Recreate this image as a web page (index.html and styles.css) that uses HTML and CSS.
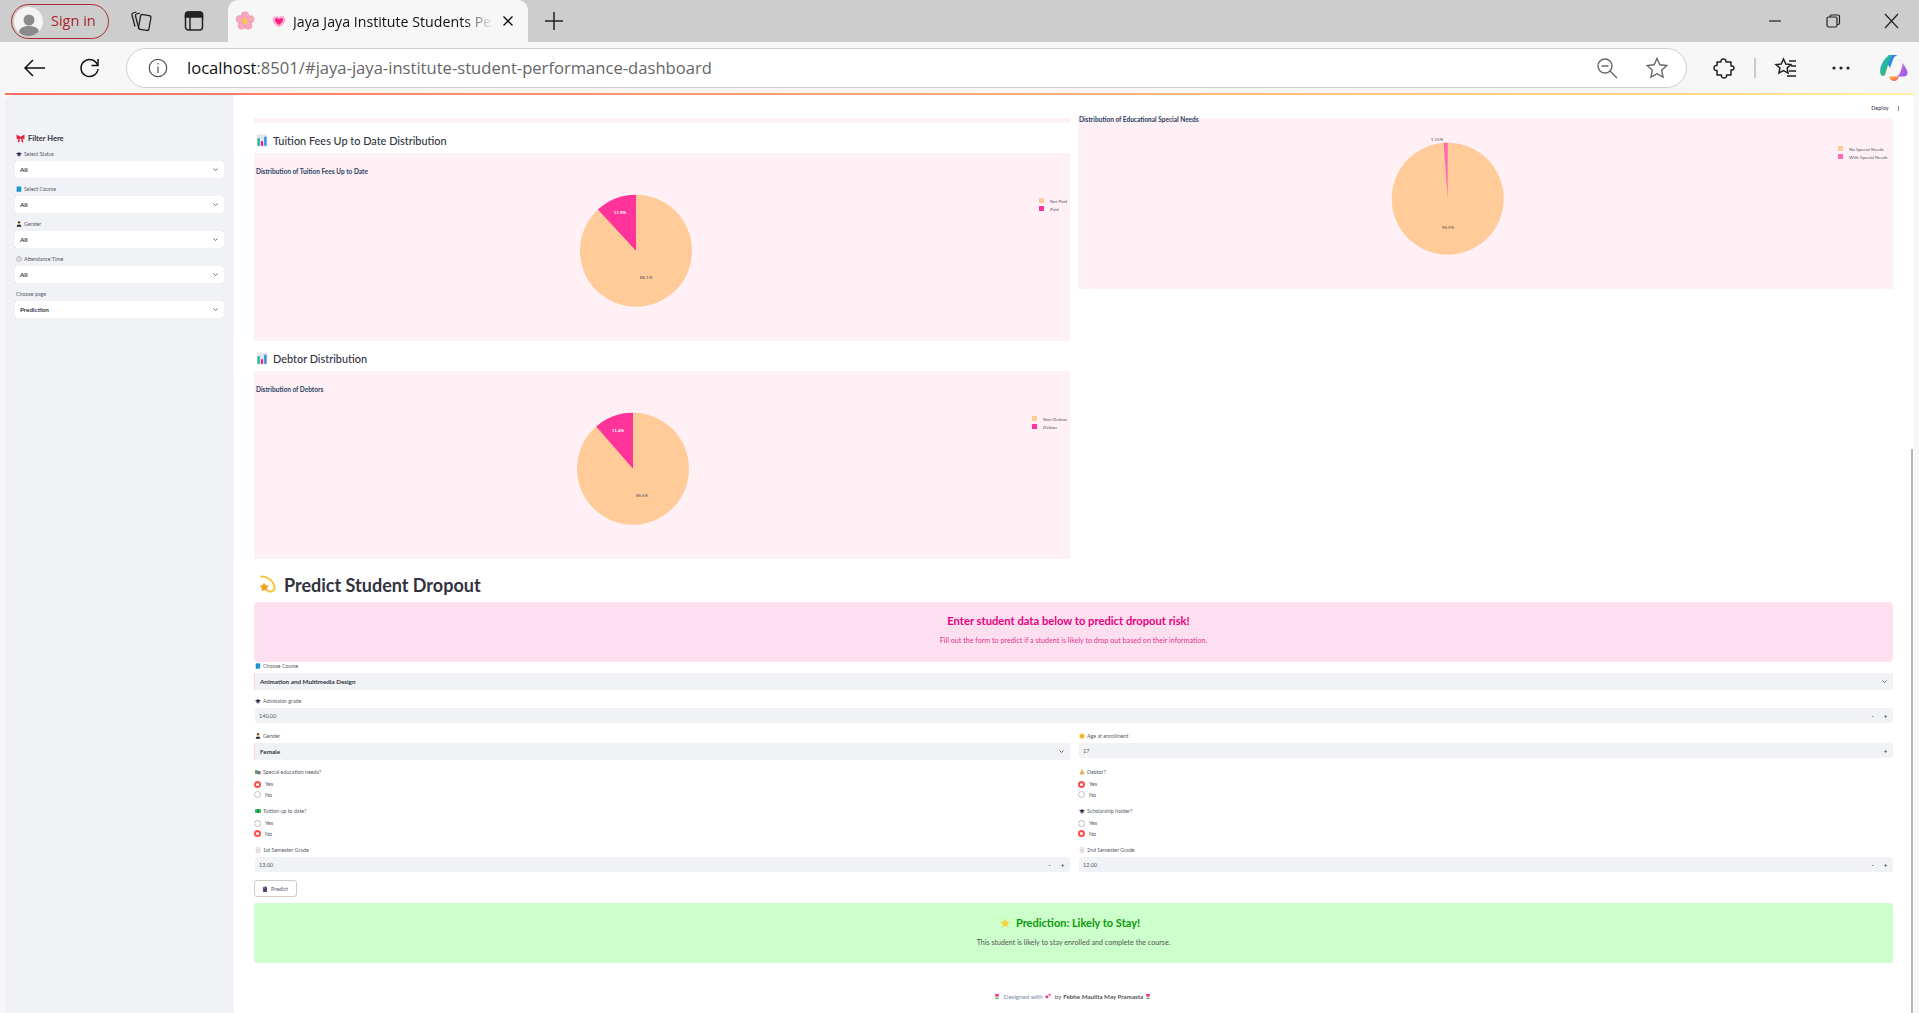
FILE: index.html
```html
<!DOCTYPE html>
<html lang="en">
  <head>
    <meta charset="UTF-8" />
    <title>Jaya Jaya Institute Students Performance</title>
    <link rel="stylesheet" href="styles.css">
  </head>
  <body>
    <svg class="defs" width="0" height="0">
      <defs>
        <linearGradient id="cop1" x1="0" y1="0" x2="1" y2="1"><stop offset="0" stop-color="#17b6e6"/><stop offset=".55" stop-color="#2fb58a"/><stop offset="1" stop-color="#f2d23c"/></linearGradient>
        <linearGradient id="cop2" x1="0" y1="0" x2="1" y2="1"><stop offset="0" stop-color="#e86fd2"/><stop offset="1" stop-color="#8a5be8"/></linearGradient>
        <linearGradient id="cop3" x1="0" y1="0" x2="1" y2="1"><stop offset="0" stop-color="#ffb52e"/><stop offset="1" stop-color="#f4587a"/></linearGradient>
        <linearGradient id="cop4" x1="0" y1="0" x2="1" y2="0"><stop offset="0" stop-color="#1e9be8"/><stop offset="1" stop-color="#3b6fe6"/></linearGradient>
      </defs>
      <symbol id="e-bow" viewBox="0 0 16 16"><path fill="#e0243c" d="M8 5 1 1v8l3-.6L3 15l3-1 1-6h2l1 6 3 1-1-6.600 3 .6V1z"/></symbol>
      <symbol id="e-cap" viewBox="0 0 16 16"><path fill="#35224a" d="M8 3 0 7l8 4 8-4z"/><path fill="#4d3a63" d="M4 10v3c2 1.500 6 1.500 8 0v-3l-4 2z"/></symbol>
      <symbol id="e-book" viewBox="0 0 16 16"><path fill="#1d97dc" d="M3 1h11v14H3z"/><path fill="#0f6fa8" d="M2 1h2v14H2z"/></symbol>
      <symbol id="e-person" viewBox="0 0 16 16"><path fill="#2b2320" d="M5 1h6v4H5z"/><path fill="#e8b25c" d="M5 5h6v3H5z"/><path fill="#2b2320" d="M2 15c0-4 2-6 6-6s6 2 6 6z"/></symbol>
      <symbol id="e-clock" viewBox="0 0 16 16"><circle cx="8" cy="8" r="6.500" fill="#f2f2f4" stroke="#777" stroke-width="1.300"/><path d="M8 4v4l3 1" fill="none" stroke="#777" stroke-width="1.200"/></symbol>
      <symbol id="e-chart" viewBox="0 0 16 16"><path fill="#e6e3ef" d="M1 0h14v16H1z"/><path fill="#12b886" d="M2 5h3v10H2z"/><path fill="#ec1c7c" d="M6.500 9h3v6h-3z"/><path fill="#1f8fe0" d="M11 3h3v12h-3z"/></symbol>
      <symbol id="e-dizzy" viewBox="0 0 16 16"><path fill="none" stroke="#f8c23c" stroke-width="1.700" d="M2 1.500c5-1 11 3 12 9 .3 3-3 4-6 3"/><path fill="#f59f1e" d="m5 6.500 1.500 2.200 2.500.3-1.400 2.100.5 2.600-2.700-1-2.400 1 .3-2.600L1.500 9l2.300-.3z"/></symbol>
      <symbol id="e-coin" viewBox="0 0 16 16"><circle cx="8" cy="8" r="7" fill="#f6c445"/><circle cx="8" cy="8" r="4.500" fill="#eeae2c"/></symbol>
      <symbol id="e-books" viewBox="0 0 16 16"><path fill="#5aa84a" d="M0 3h7v10H0z"/><path fill="#2f7fc9" d="M6 5h5v9H6z"/><path fill="#c8506a" d="M10 6h5v8h-5z"/></symbol>
      <symbol id="e-money" viewBox="0 0 16 16"><path fill="#2fbf6a" d="M0 3h16v10H0z"/><path fill="#0c7a3e" d="M6 3h4v10H6z"/></symbol>
      <symbol id="e-bag" viewBox="0 0 16 16"><path fill="#e3b06a" d="M5 1h6L9.500 5c3 1 5 4 5 7 0 2-2 3-6.500 3S1.500 14 1.500 12c0-3 2-6 5-7z"/></symbol>
      <symbol id="e-doc" viewBox="0 0 16 16"><path fill="#f4eef6" stroke="#b9aec2" d="M3 1h7l3 3v11H3z"/><path stroke="#c88fb0" d="M5 7h6M5 10h6"/></symbol>
      <symbol id="e-ball" viewBox="0 0 16 16"><circle cx="8" cy="7" r="6" fill="#5b3a7a"/><path fill="#2b2030" d="M3 12h10l1 3H2z"/><circle cx="6" cy="5" r="1.500" fill="#c9a8e4"/></symbol>
      <symbol id="e-star" viewBox="0 0 16 16"><path fill="#f9d23c" d="m8 2 1.900 3.900 4.300.6-3.100 3 .7 4.300L8 11.800l-3.800 2 .7-4.300-3.100-3 4.300-.6z"/><path stroke="#fbe58a" d="M8 0v1.500M8 14.500V16M0 8h1.500M14.500 8H16M2 2l1 1M13 13l1 1M14 2l-1 1M3 13l-1 1"/></symbol>
      <symbol id="e-hearts" viewBox="0 0 16 16"><path fill="#ec2f7c" d="M5 15C1 12 0 10 1 8s3-2 4 0c1-2 3-2 4 0s0 4-4 7z"/><path fill="#f0458e" d="M12 8c-2.500-2-3-3-2.500-4.500S12 2 12.500 3c.7-1 2.500-1 3 .5S14.500 6 12 8z"/></symbol>
      <symbol id="e-tulip" viewBox="0 0 16 16"><path fill="#f0428f" d="M3 1l2.500 2L8 1l2.500 2L13 1v6c0 2-2 3-5 3S3 9 3 7z"/><path fill="#4caf50" d="M7 10h2v6H7zM3 12l4 2v2c-2 0-4-1-4-4zM13 12l-4 2v2c2 0 4-1 4-4z"/></symbol>
      <symbol id="e-flower" viewBox="0 0 20 20"><g fill="#f6a9bd" stroke="#ee8aa6" stroke-width=".5"><circle cx="10" cy="4.500" r="3.800"/><circle cx="15.200" cy="8.300" r="3.800"/><circle cx="13.200" cy="14.500" r="3.800"/><circle cx="6.800" cy="14.500" r="3.800"/><circle cx="4.800" cy="8.300" r="3.800"/></g><circle cx="10" cy="10" r="2.800" fill="#f7c948"/></symbol>
      <symbol id="e-heart" viewBox="0 0 16 16"><path fill="#ffa8d2" d="M8 15.500C2 11.500 0 8 1 5s5-4 7-1c2-3 6-2 7 1s-1 6.500-7 10.500z"/><path fill="#f5207f" d="M8 12.500C4 9.500 3 7.500 3.700 5.800S7 4.700 8 6.500C9 4.700 11.600 4.100 12.300 5.800S12 9.500 8 12.500z"/></symbol>
    </svg>

    <div class="tabstrip">
      <div class="signin">
        <span class="avatar">
          <svg width="22" height="26" viewBox="0 0 22 26"><circle cx="11" cy="8" r="5.500" fill="#8a8a8a"/><path fill="#8a8a8a" d="M1 21c0-5 4-7 10-7s10 2 10 7c0 3-4 5-10 5S1 24 1 21z"/></svg>
        </span>
        <span class="signin-t">Sign in</span>
      </div>
      <svg class="ic ic-coll" viewBox="0 0 24 24" fill="none" stroke="#222" stroke-width="1.300"><rect x="10.500" y="6" width="10.500" height="15" rx="2" transform="rotate(10 15.700 13.500)"/><path d="M11 4 7.500 5c-1 .4-1.300 1-1 2l3.300 12.500M7.500 3 4 4c-1 .4-1.300 1-1 2l3 11.500"/></svg>
      <svg class="ic ic-vert" viewBox="0 0 24 24" fill="none" stroke="#222" stroke-width="1.500"><rect x="3.500" y="3" width="17" height="18" rx="3"/><path fill="#222" d="M3.500 6c0-2 1-3 3-3h11c2 0 3 1 3 3v2h-17z"/><path d="M8 8v13"/></svg>
      <div class="tab">
        <svg class="fav" viewBox="0 0 20 20"><use href="#e-flower"/></svg>
        <svg class="fav2" viewBox="0 0 16 16"><use href="#e-heart"/></svg>
        <span class="tabtitle">Jaya Jaya Institute Students Performance</span>
        <svg class="tabx" viewBox="0 0 12 12" stroke="#111" stroke-width="1.400"><path d="m1.500 1.500 9 9M10.500 1.500l-9 9"/></svg>
      </div>
      <svg class="ic ic-plus" viewBox="0 0 24 24" stroke="#222" stroke-width="1.500"><path d="M12 3v18M3 12h18"/></svg>
      <div class="winbtns">
        <svg class="ic" viewBox="0 0 24 24" stroke="#222" stroke-width="1.200"><path d="M6 12h12"/></svg>
        <svg class="ic" viewBox="0 0 24 24" fill="none" stroke="#222" stroke-width="1.200"><rect x="6" y="8" width="10" height="10" rx="1.500"/><path d="M9 8V7.500C9 6.500 9.500 6 10.500 6H17c1 0 1.500.5 1.500 1.500V14c0 1-.5 1.500-1.500 1.500h-1"/></svg>
        <svg class="ic" viewBox="0 0 24 24" stroke="#222" stroke-width="1.200"><path d="m6 5 13 14M19 5 6 19"/></svg>
      </div>
    </div>

    <div class="toolbar">
      <svg class="ic ic-back" viewBox="0 0 24 24" fill="none" stroke="#111" stroke-width="1.500"><path d="M23 12H3M11 4l-8 8 8 8"/></svg>
      <svg class="ic ic-reload" viewBox="0 0 24 24" fill="none" stroke="#111" stroke-width="1.500"><path d="M19.500 9a8.500 8.500 0 1 0 .5 4"/><path d="M20 3v6.500h-6.500"/></svg>
      <div class="addr">
        <svg class="ic-info" viewBox="0 0 20 20" fill="none" stroke="#555" stroke-width="1.200"><circle cx="10" cy="10" r="8.700"/><path d="M10 8.500V15M10 5v1.500"/></svg>
        <span class="url"><b>localhost</b>:8501/#jaya-jaya-institute-student-performance-dashboard</span>
        <svg class="ic ic-zoom" viewBox="0 0 24 24" fill="none" stroke="#666" stroke-width="1.400"><circle cx="10" cy="10" r="7"/><path d="M6.500 10h7M15 15l7 7"/></svg>
        <svg class="ic ic-star" viewBox="0 0 24 24" fill="none" stroke="#666" stroke-width="1.400"><path d="m12 2.500 2.900 6.300 6.800.8-5 4.700 1.300 6.900-6-3.500-6 3.500 1.300-6.900-5-4.700 6.800-.8z"/></svg>
      </div>
      <svg class="ic ic-ext" viewBox="0 0 24 24" fill="none" stroke="#222" stroke-width="1.500" stroke-linejoin="round"><path d="M9 6C8 2 15 2 14 6h5v4c4-1 4 5 0 4v5h-4.500c1 4-6 4-5 0H5v-4.500c-4 1-4-6 0-5V6z"/></svg>
      <span class="sep"></span>
      <svg class="ic ic-favs" viewBox="0 0 24 24" fill="none" stroke="#222" stroke-width="1.500"><path d="m9.500 3 2.300 5 5 .6-3.700 3.500 1 5-4.600-2.600L4.900 17l1-5L2 8.600l5.200-.6zM15 5h7M17 10h5M15 15h7M13 20h9"/></svg>
      <svg class="ic ic-dots" viewBox="0 0 24 24" fill="#222"><circle cx="5" cy="12" r="1.600"/><circle cx="12" cy="12" r="1.600"/><circle cx="19" cy="12" r="1.600"/></svg>
      <svg class="ic-cop" viewBox="0 0 28 28">
        <path fill="url(#cop4)" d="M9 1h9c-2.500.5-4 2-5 4.500L10 14 7 9c1-4 1-8 2-8z"/>
        <path fill="url(#cop1)" d="M8 2c1-1 3-1 4.500 0C9.500 4 9 7 8 11l-2 7c-.5 2.500-1.500 4-3 4-2 0-3-2.500-2.800-6C.5 11 4 5 8 2z"/>
        <path fill="url(#cop2)" d="M18 6c2 0 3.500 1 4.500 3 3 4 5 7 5 10 0 2-1.500 3.500-4 3.500h-7c2.500-1 3.500-3 4.500-6.500l1.500-5c.5-2.500-1-4.500-4.500-5z"/>
        <path fill="url(#cop3)" d="M9 22.500h10c-1 3-2.500 4.500-5 4.500-2.500 0-4-1.500-5-4.500z"/>
      </svg>
    </div>

    <div class="viewport">
      <div class="app">
        <aside class="sidebar">
          <h3 class="filter-title"><svg class="emo emo-lg"><use href="#e-bow"/></svg>Filter Here</h3>
          <div class="field">
            <div class="lbl"><svg class="emo"><use href="#e-cap"/></svg>Select Status</div>
            <div class="sel white"><span>All</span><svg class="chev" viewBox="0 0 10 6"><path d="m1 1 4 4 4-4" fill="none" stroke="#31333f" stroke-width="1.400"/></svg></div>
          </div>
          <div class="field">
            <div class="lbl"><svg class="emo"><use href="#e-book"/></svg>Select Course</div>
            <div class="sel white"><span>All</span><svg class="chev" viewBox="0 0 10 6"><path d="m1 1 4 4 4-4" fill="none" stroke="#31333f" stroke-width="1.400"/></svg></div>
          </div>
          <div class="field">
            <div class="lbl"><svg class="emo"><use href="#e-person"/></svg>Gender</div>
            <div class="sel white"><span>All</span><svg class="chev" viewBox="0 0 10 6"><path d="m1 1 4 4 4-4" fill="none" stroke="#31333f" stroke-width="1.400"/></svg></div>
          </div>
          <div class="field">
            <div class="lbl"><svg class="emo"><use href="#e-clock"/></svg>Attendance Time</div>
            <div class="sel white"><span>All</span><svg class="chev" viewBox="0 0 10 6"><path d="m1 1 4 4 4-4" fill="none" stroke="#31333f" stroke-width="1.400"/></svg></div>
          </div>
          <div class="field">
            <div class="lbl">Choose page</div>
            <div class="sel white"><span>Prediction</span><svg class="chev" viewBox="0 0 10 6"><path d="m1 1 4 4 4-4" fill="none" stroke="#31333f" stroke-width="1.400"/></svg></div>
          </div>
        </aside>

        <main class="main">
          <div class="topbar">
            <span class="deploy">Deploy</span>
            <span class="kebab"></span>
          </div>

          <section class="charts">
            <div>
              <div class="strip"></div>
              <h3 class="chart-head"><svg class="emo emo-md"><use href="#e-chart"/></svg>Tuition Fees Up to Date Distribution</h3>
              <svg class="chart" viewBox="0 0 816 188" width="816" height="188">
                <text class="ch-title" x="2" y="21">Distribution of Tuition Fees Up to Date</text>
                <circle cx="382" cy="97.700" r="56" fill="#ffcc99"/>
                <path d="M382 97.700V41.700A56 56 0 0 0 343.900 56.600Z" fill="#ff3399"/>
                <text class="ch-val white-t" x="366" y="60.800">11.9%</text>
                <text class="ch-val" x="392" y="125.800">88.1%</text>
                <rect x="785" y="45" width="5" height="5" fill="#ffcc99"/>
                <rect x="785" y="53" width="5" height="5" fill="#ff3399"/>
                <text class="ch-leg" x="796" y="49.500">Not Paid</text>
                <text class="ch-leg" x="796" y="57.500">Paid</text>
              </svg>
              <h3 class="chart-head"><svg class="emo emo-md"><use href="#e-chart"/></svg>Debtor Distribution</h3>
              <svg class="chart" viewBox="0 0 816 188" width="816" height="188">
                <text class="ch-title" x="2" y="21">Distribution of Debtors</text>
                <circle cx="379" cy="97.700" r="56" fill="#ffcc99"/>
                <path d="M379 97.700V41.700A56 56 0 0 0 342.200 55.500Z" fill="#ff3399"/>
                <text class="ch-val white-t" x="364" y="60.800">11.4%</text>
                <text class="ch-val" x="388" y="125.800">88.6%</text>
                <rect x="778" y="45" width="5" height="5" fill="#ffcc99"/>
                <rect x="778" y="53" width="5" height="5" fill="#ff3399"/>
                <text class="ch-leg" x="789" y="49.500">Non-Debtor</text>
                <text class="ch-leg" x="789" y="57.500">Debtor</text>
              </svg>
            </div>
            <div>
              <svg class="chart" viewBox="0 0 815 171" width="815" height="171">
                <text class="ch-title" x="1" y="4">Distribution of Educational Special Needs</text>
                <circle cx="369.700" cy="80.700" r="56" fill="#ffcc99"/>
                <path d="M369.700 80.700V24.700A56 56 0 0 0 365.660 24.850Z" fill="#ff69b4"/>
                <text class="ch-val" x="359" y="22.800">1.15%</text>
                <text class="ch-val" x="370" y="110.800">98.9%</text>
                <rect x="760" y="28" width="5" height="5" fill="#ffcc99"/>
                <rect x="760" y="36" width="5" height="5" fill="#ff69b4"/>
                <text class="ch-leg" x="771" y="32.500">No Special Needs</text>
                <text class="ch-leg" x="771" y="40.500">With Special Needs</text>
              </svg>
            </div>
          </section>

          <h2 class="predict-head"><svg class="emo emo-xl"><use href="#e-dizzy"/></svg>Predict Student Dropout</h2>

          <div class="banner pink">
            <p class="ban-title pink-title">Enter student data below to predict dropout risk!</p>
            <p class="ban-sub">Fill out the form to predict if a student is likely to drop out based on their information.</p>
          </div>

          <div class="field form">
            <div class="lbl"><svg class="emo"><use href="#e-book"/></svg>Choose Course</div>
            <div class="sel grey"><span>Animation and Multimedia Design</span><svg class="chev" viewBox="0 0 10 6"><path d="m1 1 4 4 4-4" fill="none" stroke="#31333f" stroke-width="1.400"/></svg></div>
          </div>
          <div class="field form">
            <div class="lbl"><svg class="emo"><use href="#e-cap"/></svg>Admission grade</div>
            <div class="num"><span class="val">140.00</span><span class="step">-</span><span class="step">+</span></div>
          </div>

          <div class="cols">
            <div class="col">
              <div class="field form">
                <div class="lbl"><svg class="emo"><use href="#e-person"/></svg>Gender</div>
                <div class="sel grey"><span>Female</span><svg class="chev" viewBox="0 0 10 6"><path d="m1 1 4 4 4-4" fill="none" stroke="#31333f" stroke-width="1.400"/></svg></div>
              </div>
              <div class="radios">
                <div class="lbl"><svg class="emo"><use href="#e-books"/></svg>Special education needs?</div>
                <div class="radio"><i class="dot on"></i>Yes</div>
                <div class="radio"><i class="dot"></i>No</div>
              </div>
              <div class="radios">
                <div class="lbl"><svg class="emo"><use href="#e-money"/></svg>Tuition up to date?</div>
                <div class="radio"><i class="dot"></i>Yes</div>
                <div class="radio"><i class="dot on"></i>No</div>
              </div>
              <div class="field form">
                <div class="lbl"><svg class="emo"><use href="#e-doc"/></svg>1st Semester Grade</div>
                <div class="num"><span class="val">13.00</span><span class="step">-</span><span class="step">+</span></div>
              </div>
            </div>
            <div class="col">
              <div class="field form">
                <div class="lbl"><svg class="emo"><use href="#e-coin"/></svg>Age at enrollment</div>
                <div class="num"><span class="val">17</span><span class="step off">-</span><span class="step">+</span></div>
              </div>
              <div class="radios">
                <div class="lbl"><svg class="emo"><use href="#e-bag"/></svg>Debtor?</div>
                <div class="radio"><i class="dot on"></i>Yes</div>
                <div class="radio"><i class="dot"></i>No</div>
              </div>
              <div class="radios">
                <div class="lbl"><svg class="emo"><use href="#e-cap"/></svg>Scholarship holder?</div>
                <div class="radio"><i class="dot"></i>Yes</div>
                <div class="radio"><i class="dot on"></i>No</div>
              </div>
              <div class="field form">
                <div class="lbl"><svg class="emo"><use href="#e-doc"/></svg>2nd Semester Grade</div>
                <div class="num"><span class="val">12.00</span><span class="step">-</span><span class="step">+</span></div>
              </div>
            </div>
          </div>

          <button class="predict-btn"><svg class="emo"><use href="#e-ball"/></svg>Predict</button>

          <div class="banner green">
            <p class="ban-title green-title"><svg class="emo emo-star"><use href="#e-star"/></svg>Prediction: Likely to Stay!</p>
            <p class="ban-sub grey-t">This student is likely to stay enrolled and complete the course.</p>
          </div>

          <footer class="foot">
            <svg class="emo"><use href="#e-tulip"/></svg>
            <span class="foot-a">Designed with</span>
            <svg class="emo"><use href="#e-hearts"/></svg>
            <span>by</span>
            <b>Febhe Maulita May Pramasta</b>
            <svg class="emo"><use href="#e-tulip"/></svg>
          </footer>
        </main>
        <div class="scroll-thumb"></div>
      </div>
    </div>
  </body>
</html>
```

FILE: styles.css
```css
* {
  box-sizing: border-box;
}
html,
body {
  margin: 0;
  height: 100%;
}
body {
  width: 1919px;
  height: 1013px;
  overflow: hidden;
  display: flex;
  flex-direction: column;
  background: #f7f7f7;
  font-family: Lato, "Noto Sans", sans-serif;
  color: #31333f;
}
.defs {
  position: absolute;
}
p,
h2,
h3 {
  margin: 0;
}

/* browser frame */
.tabstrip {
  height: 42px;
  flex: none;
  display: flex;
  align-items: center;
  background: #cdcdcd;
  font-family: "Open Sans", sans-serif;
}
.ic {
  width: 24px;
  height: 24px;
  flex: none;
}
.signin {
  margin-left: 11px;
  width: 98px;
  height: 35px;
  display: flex;
  align-items: center;
  gap: 8px;
  padding-left: 2px;
  border: 1.500px solid #b02a30;
  border-radius: 18px;
  color: #a8262c;
  font-size: 14.500px;
}
.signin-t {
  margin-top: -2px;
}
.avatar {
  width: 29px;
  height: 29px;
  border-radius: 50%;
  background: #f4f4f4;
  overflow: hidden;
  display: flex;
  justify-content: center;
  padding-top: 5px;
}
.ic-coll {
  margin-left: 20px;
}
.ic-vert {
  margin-left: 29px;
}
.tab {
  margin-left: 22px;
  width: 300px;
  height: 42px;
  display: flex;
  align-items: center;
  background: #f7f7f7;
  border-radius: 10px 10px 0 0;
  font-size: 14.200px;
  color: #111;
}
.fav {
  width: 20px;
  height: 20px;
  margin-left: 7px;
}
.fav2 {
  width: 14px;
  height: 14px;
  margin-left: 17px;
}
.tabtitle {
  margin-left: 7px;
  width: 200px;
  white-space: nowrap;
  overflow: hidden;
  -webkit-mask-image: linear-gradient(90deg, #000 85%, transparent);
  mask-image: linear-gradient(90deg, #000 85%, transparent);
}
.tabx {
  width: 12px;
  height: 12px;
  margin-left: 9px;
}
.ic-plus {
  margin-left: 14px;
}
.winbtns {
  margin-left: auto;
  margin-right: 16px;
  display: flex;
  gap: 34px;
}
.toolbar {
  height: 51px;
  flex: none;
  display: flex;
  align-items: center;
  background: #f7f7f7;
  font-family: "Open Sans", sans-serif;
}
.ic-back {
  margin-left: 22px;
}
.ic-reload {
  margin-left: 32px;
}
.addr {
  margin-left: 24px;
  width: 1561px;
  height: 40px;
  display: flex;
  align-items: center;
  background: #fff;
  border: 1px solid #cfcfcf;
  border-radius: 20px;
}
.ic-info {
  width: 20px;
  height: 20px;
  margin-left: 21px;
}
.url {
  margin-left: 19px;
  font-size: 16.600px;
  color: #666;
  white-space: nowrap;
}
.url b {
  font-weight: 400;
  color: #111;
}
.ic-zoom {
  margin-left: auto;
}
.ic-star {
  margin-left: 26px;
  margin-right: 17px;
}
.ic-ext {
  margin-left: 25px;
}
.sep {
  width: 1.500px;
  height: 20px;
  margin-left: 18px;
  background: #ccc;
}
.ic-favs {
  margin-left: 18px;
}
.ic-dots {
  margin-left: 31px;
}
.ic-cop {
  width: 28px;
  height: 28px;
  margin-left: 27px;
}

/* page */
.viewport {
  flex: 1;
  min-height: 0;
  padding: 0 5px;
}
.app {
  position: relative;
  height: 100%;
  display: flex;
  background: #fff;
  border-radius: 8px 8px 0 0;
  overflow: hidden;
  border-top: 2px solid transparent;
  border-image: linear-gradient(90deg, #ff6f61, #ffd98a 90%, #fff3a8) 1;
}
.sidebar {
  width: 229px;
  flex: none;
  background: #f0f2f6;
  padding: 36px 10px 0;
}
.filter-title {
  display: flex;
  align-items: center;
  gap: 3px;
  height: 14px;
  margin-bottom: 3px;
  font-size: 7.500px;
  font-weight: 700;
  margin-left: 1px;
}
.emo {
  width: 6px;
  height: 6px;
  margin-right: 2px;
  flex: none;
}
.emo-lg {
  width: 9px;
  height: 9px;
  margin-right: 0;
}
.emo-md {
  width: 12px;
  height: 13px;
  margin-right: 5px;
}
.emo-xl {
  width: 19px;
  height: 19px;
  margin-right: 7px;
  margin-left: 4px;
}
.emo-star {
  width: 12px;
  height: 12px;
  margin-right: 5px;
}
.field {
  height: 35px;
}
.lbl {
  display: flex;
  align-items: center;
  height: 12px;
  margin-bottom: 1px;
  font-size: 5.300px;
  color: #555a68;
  white-space: nowrap;
  padding-left: 1px;
}
.sel {
  height: 17px;
  display: flex;
  align-items: center;
  justify-content: space-between;
  padding: 0 6px 0 5px;
  font-size: 6.300px;
  font-weight: 700;
}
.sel.white {
  background: linear-gradient(#f9c9dc, #f9c9dc) 0 0 / 1px 1px no-repeat, linear-gradient(#f9c9dc, #f9c9dc) 100% 0 / 1px 1px no-repeat, linear-gradient(#f9c9dc, #f9c9dc) 0 100% / 1px 1px no-repeat, linear-gradient(#f9c9dc, #f9c9dc) 100% 100% / 1px 1px no-repeat, #fff;
}
.sel.grey {
  background: #f0f2f6;
  border-left: 1px solid #fbd5e0;
}
.chev {
  width: 5px;
  height: 3px;
}

.main {
  flex: 1;
  min-width: 0;
  padding: 0 21px 0 20px;
}
.topbar {
  height: 23px;
  display: flex;
  justify-content: flex-end;
  align-items: center;
  padding-top: 3px;
  margin-right: -6px;
  gap: 9px;
}
.deploy {
  font-size: 5.500px;
}
.kebab {
  width: 1.500px;
  height: 5px;
  background: #888;
}
.charts {
  display: grid;
  grid-template-columns: 816px 815px;
  gap: 8px;
  align-items: start;
}
.strip {
  height: 5px;
  background: #fff0f5;
}
.chart {
  display: block;
  background: #fff0f5;
  overflow: visible;
}
.chart-head {
  height: 30px;
  display: flex;
  align-items: center;
  padding-left: 2px;
  font-size: 10.900px;
  font-weight: 500;
  padding-top: 4px;
}
.ch-title {
  font-size: 6.500px;
  font-weight: 700;
  fill: #2a3f5f;
}
.ch-val {
  font-size: 4.500px;
  fill: #555;
  text-anchor: middle;
}
.white-t {
  fill: #fff;
  font-weight: 700;
}
.ch-leg {
  font-size: 4.500px;
  fill: #55566a;
}
.predict-head {
  height: 43px;
  display: flex;
  align-items: center;
  font-size: 18px;
  font-weight: 700;
  padding-top: 8px;
}
.banner {
  height: 60px;
  border-radius: 4px;
  text-align: center;
  padding-top: 12px;
}
.pink {
  background: #fddfef;
}
.green {
  background: #ccffcc;
  border-radius: 3px;
  margin-top: 6px;
  padding-top: 13px;
}
.ban-title {
  font-size: 11.200px;
  font-weight: 700;
  line-height: 14px;
  display: flex;
  justify-content: center;
  align-items: center;
}
.pink-title {
  color: #e6007e;
  padding-right: 10px;
}
.green-title {
  color: #0a9a0a;
  padding-right: 8px;
  font-size: 11px;
}
.ban-sub {
  margin-top: 8px;
  font-size: 7.150px;
  line-height: 10px;
  color: #e6338f;
}
.grey-t {
  color: #555;
  margin-top: 8px;
}
.form .lbl {
  height: 10px;
  padding-bottom: 2px;
}
.num {
  height: 15px;
  margin: 1px 0 0 1px;
  display: flex;
  align-items: center;
  background: #f0f2f6;
  border-radius: 3px;
  font-size: 5.500px;
  padding: 0 1px 0 4px;
  color: #555a68;
}
.val {
  flex: 1;
}
.step {
  width: 13px;
  text-align: center;
  font-weight: 700;
  color: #31333f;
}
.step.off {
  color: #f0f2f6;
}
.cols {
  display: grid;
  grid-template-columns: 816px 815px;
  gap: 8px;
}
.cols .field:first-child {
  height: 34px;
}
.radios {
  height: 39px;
}
.radios + .field {
  margin-top: 2px;
}
.radio {
  height: 10.500px;
  display: flex;
  align-items: center;
  font-size: 5.500px;
  color: #555a68;
  gap: 4px;
}
.radios .lbl + .radio {
  margin-top: 1px;
}
.dot {
  width: 7px;
  height: 7px;
  border-radius: 50%;
  border: 1px solid #bbb;
  background: #fff;
}
.dot.on {
  border: 2.300px solid #ff4b4b;
}
.predict-btn {
  display: flex;
  align-items: center;
  width: 43px;
  height: 17px;
  margin-top: -1px;
  padding: 0 0 0 7px;
  background: #fff;
  border: 1px solid #ccc;
  border-radius: 3px;
  font-family: inherit;
  font-size: 5.500px;
  color: #555a68;
}
.predict-btn .emo {
  margin-right: 3px;
}
.foot {
  margin-top: 28px;
  display: flex;
  justify-content: center;
  align-items: center;
  gap: 2px;
  font-size: 6.200px;
  color: #555;
  height: 10px;
}
.foot-a {
  color: #7a88a8;
}
.scroll-thumb {
  position: absolute;
  right: 1px;
  top: 354px;
  bottom: 0;
  width: 2px;
  background: #b5b5b5;
}
```
